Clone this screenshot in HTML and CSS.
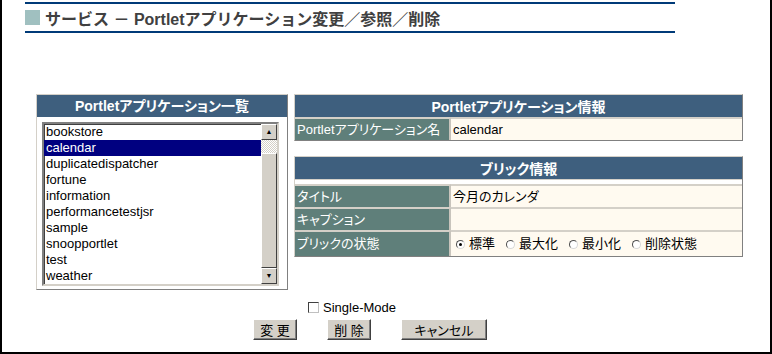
FILE: index.html
```html
<!DOCTYPE html>
<html lang="ja">
<head>
    <meta charset="UTF-8">
    <title>Portletアプリケーション変更／参照／削除</title>
    <link rel="stylesheet" href="styles.css">
</head>
<body>
    <div class="page">
        <div class="title-bar">
            <span class="title-mark"></span>
            <span class="title-text">サービス － Portletアプリケーション変更／参照／削除</span>
        </div>

        <div class="main">
            <div class="list-panel">
                <div class="panel-head">Portletアプリケーション一覧</div>
                <div class="panel-body">
                    <div class="listbox">
                        <ul class="items">
                            <li>bookstore</li>
                            <li class="selected">calendar</li>
                            <li>duplicatedispatcher</li>
                            <li>fortune</li>
                            <li>information</li>
                            <li>performancetestjsr</li>
                            <li>sample</li>
                            <li>snoopportlet</li>
                            <li>test</li>
                            <li>weather</li>
                        </ul>
                        <div class="scrollbar">
                            <div class="sb-btn">&#9650;</div>
                            <div class="sb-track"></div>
                            <div class="sb-thumb"></div>
                            <div class="sb-btn">&#9660;</div>
                        </div>
                    </div>
                </div>
            </div>

            <div class="info">
                <table class="info-table">
                    <tr><th colspan="2">Portletアプリケーション情報</th></tr>
                    <tr>
                        <td class="label">Portletアプリケーション名</td>
                        <td class="value">calendar</td>
                    </tr>
                </table>

                <table class="info-table">
                    <tr><th colspan="2">ブリック情報</th></tr>
                    <tr class="spacer"><td colspan="2"></td></tr>
                    <tr>
                        <td class="label">タイトル</td>
                        <td class="value">今月のカレンダ</td>
                    </tr>
                    <tr>
                        <td class="label">キャプション</td>
                        <td class="value"></td>
                    </tr>
                    <tr class="state-row">
                        <td class="label">ブリックの状態</td>
                        <td class="value">
                            <div class="radio-group">
                                <span class="opt"><span class="radio checked"></span>標準</span>
                                <span class="opt"><span class="radio"></span>最大化</span>
                                <span class="opt"><span class="radio"></span>最小化</span>
                                <span class="opt"><span class="radio"></span>削除状態</span>
                            </div>
                        </td>
                    </tr>
                </table>
            </div>
        </div>

        <div class="mode">
            <span class="checkbox"></span>Single-Mode
        </div>
        <div class="buttons">
            <button class="btn btn-small">変 更</button>
            <button class="btn btn-small">削 除</button>
            <button class="btn btn-wide">キャンセル</button>
        </div>
    </div>
</body>
</html>
```

FILE: styles.css
```css
body {
    margin: 0;
    font-family: "Liberation Sans", "Noto Sans CJK JP", sans-serif;
    font-size: 13px;
    font-feature-settings: "palt";
    color: #000;
    background: #fff;
}
.page {
    box-sizing: border-box;
    width: 772px;
    height: 354px;
    padding-top: 2px;
    border: 2px solid #000;
    border-top: none;
}

/* title */
.title-bar {
    display: flex;
    align-items: center;
    width: 650px;
    height: 27px;
    margin-left: 23px;
    border-top: 2px solid #003a78;
    border-bottom: 2px solid #003a78;
}
.title-mark {
    width: 15px;
    height: 15px;
    margin-right: 5px;
    background: #a0c0c0;
}
.title-text {
    font-size: 16px;
    font-weight: bold;
    color: #404040;
    font-feature-settings: normal;
}

/* main area */
.main {
    display: flex;
    align-items: flex-start;
    margin-top: 61px;
    padding-left: 34px;
}
.list-panel {
    width: 250px;
    border: 1px solid;
    border-color: #d4d0c8 #808080 #808080 #d4d0c8;
}
.panel-head {
    height: 22px;
    line-height: 22px;
    background: #3e5f7e;
    color: #fff;
    font-size: 14px;
    font-weight: bold;
    text-align: center;
}
.panel-body {
    padding: 5px 8px 3px 5px;
}
.listbox {
    display: flex;
    height: 160px;
    border: 2px solid;
    border-color: #808080 #d4d0c8 #d4d0c8 #808080;
    box-shadow: inset 1px 1px #404040;
    background: #fff;
}
.items {
    flex: 1;
    margin: 0;
    padding: 0;
    list-style: none;
}
.items li {
    height: 16px;
    line-height: 16px;
    padding-left: 2px;
}
.items li.selected {
    background: #000080;
    color: #fff;
}
.scrollbar {
    display: flex;
    flex-direction: column;
    width: 16px;
}
.sb-btn {
    box-sizing: border-box;
    height: 16px;
    background: #d4d0c8;
    border: 1px solid;
    border-color: #fff #404040 #404040 #fff;
    font-size: 7px;
    line-height: 13px;
    text-align: center;
}
.sb-track {
    height: 13px;
    background: repeating-conic-gradient(#d4d0c8 0 25%, #fff 0 50%) 0 0 / 2px 2px;
}
.sb-thumb {
    box-sizing: border-box;
    flex: 1;
    background: #d4d0c8;
    border: 1px solid;
    border-color: #fff #404040 #404040 #fff;
}

/* info tables */
.info {
    display: flex;
    flex-direction: column;
    gap: 15px;
    margin-left: 6px;
}
.info-table {
    width: 449px;
    border-spacing: 0;
    border: 1px solid;
    border-color: #d4d0c8 #808080 #808080 #d4d0c8;
}
.info-table th {
    height: 22px;
    padding: 0;
    background: #3e5f7e;
    color: #fff;
    font-size: 14px;
    font-weight: bold;
}
.info-table td {
    height: 21px;
    padding: 0 2px;
    border-top: 2px solid #d4d0c8;
    line-height: 20px;
}
.info-table .label {
    width: 150px;
    background: #5f7f7a;
    color: #fff;
    border-right: 2px solid #c8c4bc;
}
.info-table .value {
    background: #fffaf0;
}
.info-table .spacer td {
    height: 4px;
    padding: 0;
    background: #fff;
    border-top: 1px solid #d4d0c8;
}
.info-table .state-row td {
    height: 24px;
}
.radio-group {
    display: flex;
    align-items: center;
    padding-left: 3px;
}
.opt {
    display: flex;
    align-items: center;
    margin-right: 11px;
}
.radio {
    box-sizing: border-box;
    width: 9px;
    height: 9px;
    margin-right: 4px;
    border: 1px solid;
    border-color: #505050 #d8d8d8 #d8d8d8 #505050;
    border-radius: 50%;
    background: #fff;
    position: relative;
}
.radio.checked::after {
    content: "";
    position: absolute;
    left: 2px;
    top: 2px;
    width: 3px;
    height: 3px;
    border-radius: 50%;
    background: #000;
}

/* bottom controls */
.mode {
    display: flex;
    align-items: center;
    margin-top: 9px;
    padding-left: 306px;
    height: 16px;
}
.checkbox {
    box-sizing: border-box;
    width: 11px;
    height: 11px;
    margin-right: 4px;
    border: 1px solid;
    border-color: #404040 #c0c0c0 #c0c0c0 #404040;
    background: #fff;
}
.buttons {
    display: flex;
    gap: 30px;
    margin-top: 4px;
    padding-left: 251px;
}
.btn {
    box-sizing: border-box;
    height: 21px;
    padding: 0;
    background: #d4d0c8;
    border: 1px solid;
    border-color: #fff #404040 #404040 #fff;
    box-shadow: inset -1px -1px #808080;
    font-family: "Liberation Sans", "Noto Sans CJK JP", sans-serif;
    font-size: 13px;
    font-feature-settings: "palt";
    color: #000;
}
.btn-small {
    width: 44px;
}
.btn-wide {
    width: 86px;
}
```
